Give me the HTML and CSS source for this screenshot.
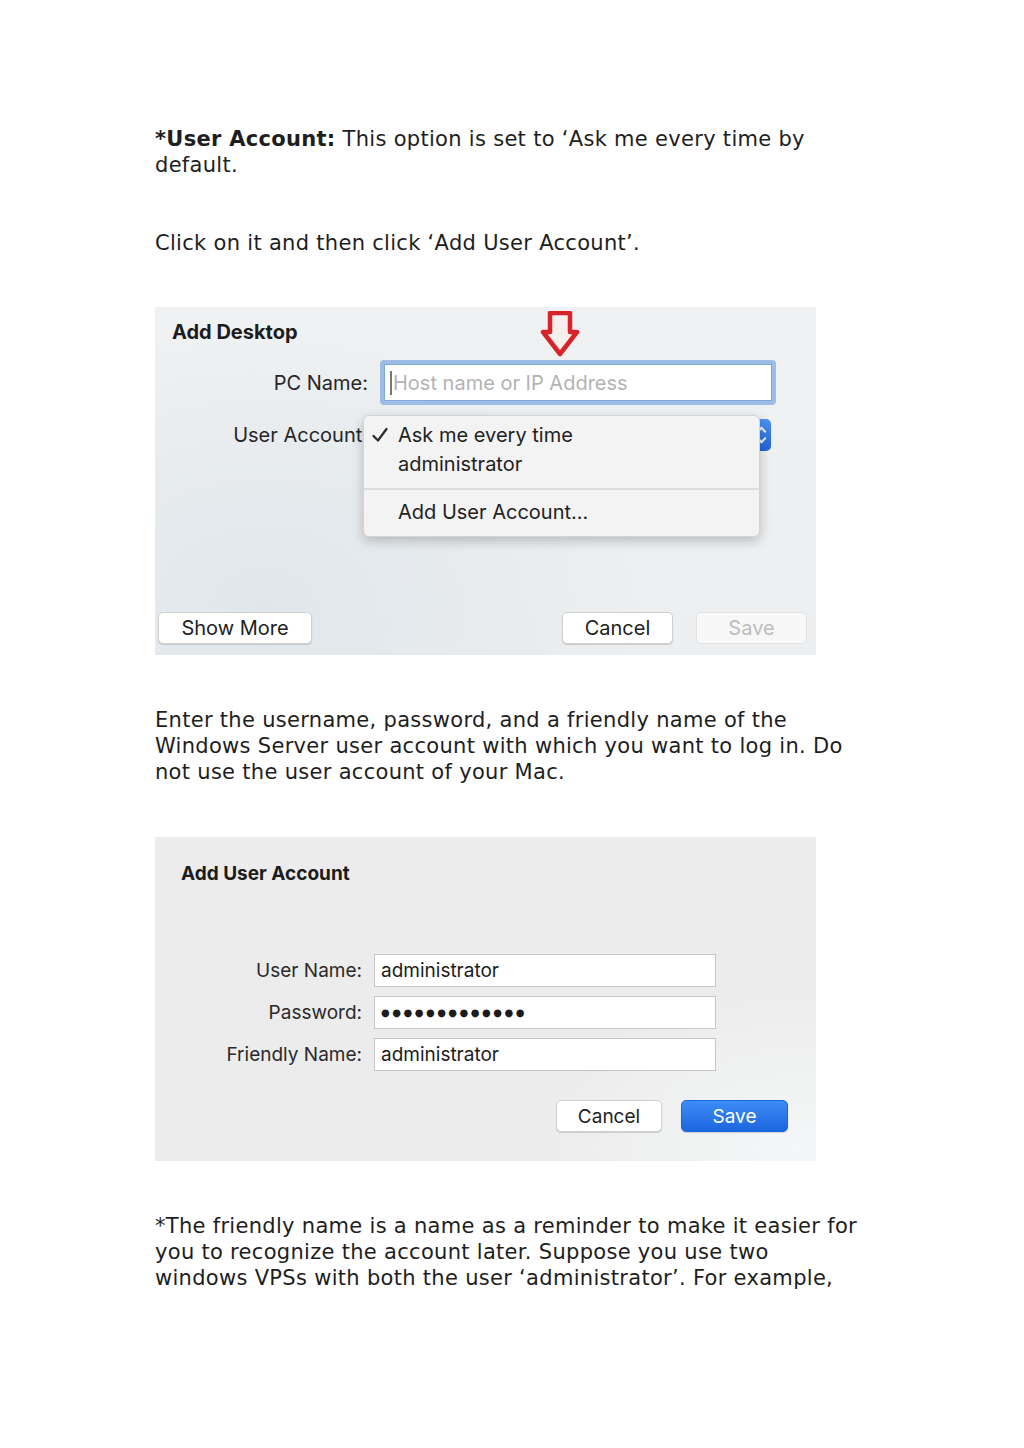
FILE: index.html
```html
<!DOCTYPE html>
<html lang="en">
<head>
  <meta charset="UTF-8">
  <meta name="viewport" content="width=device-width, initial-scale=1">
  <title>Add User Account - Remote Desktop on Mac</title>
  <link rel="stylesheet" href="styles.css">
</head>
<body>
  <div class="page">
    <p class="text"><b>*User Account:</b> This option is set to ‘Ask me every time by<br>default.</p>

    <p class="text">Click on it and then click ‘Add User Account’.</p>

    <!-- screenshot 1: add desktop dialog with the account menu open -->
    <div class="dialog desktop">
      <div class="dialog-title">Add Desktop</div>
      <svg class="arrow" viewBox="0 0 40 46" width="40" height="46">
        <path d="M10 2 H30 V21 H37 L20 43 L3 21 H10 Z" fill="#f7eeee" stroke="#d8232b" stroke-width="4.5" stroke-linejoin="round"/>
      </svg>

      <div class="form-row pc-row">
        <label class="label">PC Name:</label>
        <div class="input focus"><span class="caret"></span><span class="placeholder">Host name or IP Address</span></div>
      </div>
      <div class="form-row account">
        <label class="label">User Account:</label>
        <div class="popup"><span class="stepper"></span></div>
      </div>

      <div class="menu">
        <div class="menu-item">
          <svg class="check" viewBox="0 0 16 16" width="16" height="16"><path d="M1.5 9 L6 13.5 L14.5 2" fill="none" stroke="#2a2a2a" stroke-width="2.2" stroke-linecap="round" stroke-linejoin="round"/></svg>
          Ask me every time
        </div>
        <div class="menu-item">administrator</div>
        <div class="menu-sep"></div>
        <div class="menu-item">Add User Account...</div>
      </div>

      <div class="dialog-footer">
        <button class="btn more">Show More</button>
        <span class="spacer"></span>
        <button class="btn">Cancel</button>
        <button class="btn disabled">Save</button>
      </div>
    </div>

    <p class="text">Enter the username, password, and a friendly name of the<br>Windows Server user account with which you want to log in. Do<br>not use the user account of your Mac.</p>

    <!-- screenshot 2: add user account sheet -->
    <div class="dialog user">
      <div class="dialog-title">Add User Account</div>
      <div class="fields">
        <label class="label">User Name:</label>
        <div class="input">administrator</div>
        <label class="label">Password:</label>
        <div class="input dots">●●●●●●●●●●●●●</div>
        <label class="label">Friendly Name:</label>
        <div class="input">administrator</div>
      </div>
      <div class="dialog-footer">
        <button class="btn">Cancel</button>
        <button class="btn primary">Save</button>
      </div>
    </div>

    <p class="text">*The friendly name is a name as a reminder to make it easier for<br>you to recognize the account later. Suppose you use two<br>windows VPSs with both the user ‘administrator’. For example,</p>
  </div>
</body>
</html>
```

FILE: styles.css
```css
body {
  margin: 0;
  background: #fff;
  color: #1e1e1e;
}

.page {
  padding: 126px 0 0 155px;
  display: flex;
  flex-direction: column;
  align-items: flex-start;
  gap: 52px;
}

.text {
  margin: 0;
  font-family: 'DejaVu Sans', Verdana, sans-serif;
  font-size: 21px;
  letter-spacing: 0.3px;
  line-height: 26px;
  white-space: nowrap;
}

/* mac dialogs */
.dialog {
  position: relative;
  width: 661px;
  box-sizing: border-box;
  font-family: Inter, Roboto, sans-serif;
  color: #222;
  display: flex;
  flex-direction: column;
}

.dialog-title {
  font-weight: bold;
  color: #1c1c1c;
}

.desktop {
  height: 348px;
  margin-top: -1px;
  padding: 11px 9px 11px 17px;
  font-size: 20px;
  background:
    radial-gradient(ellipse 380px 280px at 110px 300px, #e0e7ec 0%, rgba(224,231,236,0) 100%),
    linear-gradient(180deg, #eff1f2 0%, #edeeef 100%);
}

.desktop .dialog-title {
  font-size: 20px;
  line-height: 28px;
}

.arrow {
  position: absolute;
  left: 385px;
  top: 4px;
}

.form-row {
  display: flex;
  align-items: center;
  gap: 12px;
}

.desktop .form-row {
  margin-left: -17px;
}

.desktop .label {
  width: 213px;
  flex: none;
  text-align: right;
  color: #262626;
}

.pc-row {
  margin-top: 14px;
  height: 45px;
}

.input {
  background: #fff;
  box-sizing: border-box;
}

.input.focus {
  width: 396px;
  height: 45px;
  border: 4px solid #9dbde6;
  border-radius: 4px;
  display: flex;
  align-items: center;
  padding-left: 6px;
  box-shadow: inset 0 0 0 1px #7ea7da;
}

.caret {
  width: 2px;
  height: 24px;
  background: #777;
  margin-right: 1px;
}

.placeholder {
  color: #b3b3b3;
}

.account {
  margin-top: 14px;
  height: 32px;
}

.popup {
  width: 396px;
  height: 32px;
  position: relative;
}

.stepper {
  position: absolute;
  right: 5px;
  top: 0;
  width: 22px;
  height: 32px;
  border-radius: 5px;
  background: linear-gradient(180deg, #4b93f1 0%, #1f63d5 100%);
}

.stepper::before,
.stepper::after {
  content: '';
  position: absolute;
  right: 6px;
  width: 5px;
  height: 5px;
  border-right: 2px solid #eaf2ff;
  transform: rotate(-45deg);
}

.stepper::before {
  top: 9px;
  border-top: 2px solid #eaf2ff;
}

.stepper::after {
  top: 16px;
  border-bottom: 2px solid #eaf2ff;
  transform: rotate(45deg);
}

.menu {
  position: absolute;
  z-index: 2;
  left: 208px;
  top: 108px;
  width: 397px;
  height: 122px;
  padding: 5px 0 0;
  background: #f3f3f3;
  border-radius: 6px;
  border: 1px solid #d4d4d4;
  box-shadow: 0 4px 12px rgba(0,0,0,0.22);
  box-sizing: border-box;
}

.menu-item {
  position: relative;
  padding-left: 34px;
  line-height: 29px;
  color: #222;
}

.check {
  position: absolute;
  left: 8px;
  top: 6px;
}

.menu-sep {
  height: 2px;
  background: #dedede;
  margin: 9px 0 8px;
}

.dialog-footer {
  margin-top: auto;
  display: flex;
  gap: 23px;
}

.desktop .dialog-footer {
  margin-left: -14px;
}

.spacer {
  flex: 1;
}

.btn {
  font-family: Inter, Roboto, sans-serif;
  font-size: 20px;
  height: 32px;
  width: 111px;
  padding: 0;
  background: #fff;
  color: #222;
  border: 1px solid #d0d0d0;
  border-radius: 5px;
  box-shadow: 0 1px 1px rgba(0,0,0,0.15);
}

.btn.more {
  width: 154px;
}

.btn.disabled {
  color: #bdbdbd;
  background: #f7f7f7;
  border-color: #e2e2e2;
  box-shadow: none;
}

.user {
  height: 324px;
  padding: 24px 28px 29px 26px;
  font-size: 19px;
  background:
    radial-gradient(ellipse 260px 160px at 640px 310px, #f4f6f7 0%, rgba(244,246,247,0) 100%),
    #ececec;
}

.user .dialog-title {
  font-size: 19px;
  line-height: 25px;
}

.fields {
  margin-top: 68px;
  margin-left: -26px;
  display: grid;
  grid-template-columns: 207px 342px;
  column-gap: 12px;
  row-gap: 9px;
  align-items: center;
}

.user .label {
  text-align: right;
  color: #2a2a2a;
}

.fields .input {
  height: 33px;
  line-height: 31px;
  border: 1px solid #c6c6c6;
  padding-left: 6px;
  color: #1c1c1c;
}

.input.dots {
  font-family: 'DejaVu Sans', sans-serif;
  font-size: 10px;
  letter-spacing: 2.5px;
}

.user .dialog-footer {
  justify-content: flex-end;
  gap: 19px;
}

.user .btn {
  font-size: 19px;
  width: 106px;
}

.btn.primary {
  width: 107px;
  color: #fff;
  border-color: #1b66dc;
  background: linear-gradient(180deg, #3d8cf6 0%, #1d66e0 100%);
}
```
